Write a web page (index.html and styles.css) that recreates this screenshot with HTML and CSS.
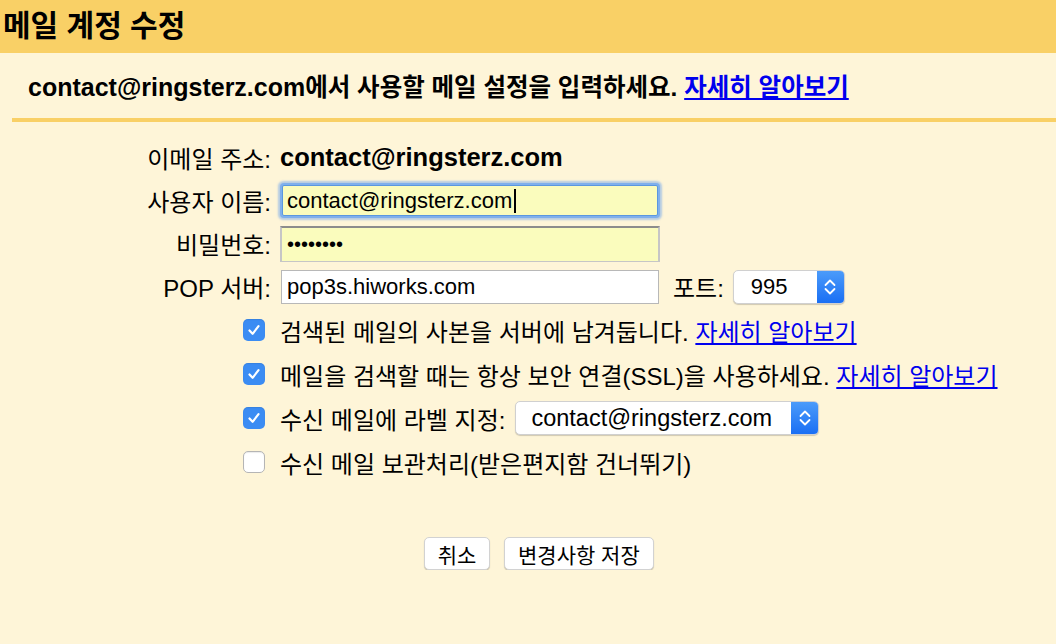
FILE: index.html
```html
<!DOCTYPE html>
<html lang="ko">
<head>
<meta charset="utf-8">
<title>메일 계정 수정</title>
<link rel="stylesheet" href="styles.css">
</head>
<body>
<div class="header"><h1>메일 계정 수정</h1></div>
<div class="intro"><p><span class="en">contact@ringsterz.com</span>에서 사용할 메일 설정을 입력하세요. <a href="#">자세히 알아보기</a></p></div>
<div class="rule"></div>
<div class="form">
  <div class="row"><span class="label">이메일 주소:</span><span class="value">contact@ringsterz.com</span></div>
  <div class="row"><span class="label">사용자 이름:</span><div class="field focused">contact@ringsterz.com<span class="caret"></span></div></div>
  <div class="row"><span class="label">비밀번호:</span><div class="field pwd">••••••••</div></div>
  <div class="row"><span class="label">POP 서버:</span><div class="field plain">pop3s.hiworks.com</div><span class="port-label">포트:</span>
    <div class="select port"><span class="sel-text">995</span><span class="sel-btn"><svg viewBox="0 0 16 22" width="16" height="22"><path d="M3.5 9 L8 4.5 L12.5 9 M3.5 13 L8 17.5 L12.5 13" fill="none" stroke="#fff" stroke-width="1.8" stroke-linecap="round" stroke-linejoin="round"/></svg></span></div>
  </div>
</div>
<div class="options">
  <div class="opt"><span class="cb on"><svg viewBox="0 0 22 22" width="22" height="22"><path d="M6.5 11.5 L9.6 14.8 L15.5 7.2" fill="none" stroke="#fff" stroke-width="2.2" stroke-linecap="round" stroke-linejoin="round"/></svg></span><span class="opt-text">검색된 메일의 사본을 서버에 남겨둡니다. <a href="#">자세히 알아보기</a></span></div>
  <div class="opt"><span class="cb on"><svg viewBox="0 0 22 22" width="22" height="22"><path d="M6.5 11.5 L9.6 14.8 L15.5 7.2" fill="none" stroke="#fff" stroke-width="2.2" stroke-linecap="round" stroke-linejoin="round"/></svg></span><span class="opt-text">메일을 검색할 때는 항상 보안 연결(SSL)을 사용하세요. <a href="#">자세히 알아보기</a></span></div>
  <div class="opt"><span class="cb on"><svg viewBox="0 0 22 22" width="22" height="22"><path d="M6.5 11.5 L9.6 14.8 L15.5 7.2" fill="none" stroke="#fff" stroke-width="2.2" stroke-linecap="round" stroke-linejoin="round"/></svg></span><span class="opt-text">수신 메일에 라벨 지정:</span>
    <div class="select labelsel"><span class="sel-text">contact@ringsterz.com</span><span class="sel-btn"><svg viewBox="0 0 16 22" width="16" height="22"><path d="M3.5 9 L8 4.5 L12.5 9 M3.5 13 L8 17.5 L12.5 13" fill="none" stroke="#fff" stroke-width="1.8" stroke-linecap="round" stroke-linejoin="round"/></svg></span></div>
  </div>
  <div class="opt"><span class="cb"></span><span class="opt-text">수신 메일 보관처리(받은편지함 건너뛰기)</span></div>
</div>
<div class="actions"><button class="btn cancel">취소</button><button class="btn">변경사항 저장</button></div>
</body>
</html>
```

FILE: styles.css
```css
body {
  margin: 0;
  background: #fef5d8;
  font-family: "Liberation Sans", "Noto Sans CJK KR", sans-serif;
  color: #000;
}
a { color: #0000ee; text-decoration: underline; }

.header {
  height: 53px;
  background: #f9d066;
  display: flex;
  align-items: center;
  padding-left: 3px;
  padding-bottom: 2px;
  box-sizing: border-box;
}
.header h1 { margin: 0; font-size: 30px; font-weight: bold; line-height: 1; }

.intro {
  height: 65px;
  display: flex;
  align-items: center;
  padding-left: 28px;
}
.intro p { margin: 0; font-size: 24.5px; font-weight: bold; }
.intro .en { font-size: 25px; }

.rule { margin-left: 12px; height: 4px; background: #f9d066; }

.form { padding-top: 14px; }
.row { height: 43px; display: flex; align-items: center; }
.label { width: 271px; text-align: right; font-size: 24px; margin-right: 9px; flex: none; }
.value { font-size: 25.5px; font-weight: bold; }

.field {
  width: 380px;
  height: 34px;
  box-sizing: border-box;
  font-size: 22px;
  display: flex;
  align-items: center;
  padding-left: 5px;
  background: #fff;
}
.field.focused {
  width: 376px;
  height: 31px;
  margin-left: 2px;
  background: #fafcbd;
  border: 1px solid #5a97df;
  border-radius: 2px;
  box-shadow: 0 0 0 2px #7fb0ec, 0 0 2px 4px rgba(120, 170, 235, 0.55);
  padding-left: 4px;
}
.caret { display: inline-block; width: 2px; height: 24px; background: #000; margin-left: 2px; }
.field.pwd {
  height: 36px;
  background: #fafcbd;
  border: 2px solid #c6c6c6;
  border-top-color: #8c8c8c;
  border-bottom-width: 1px;
  font-size: 20px;
  padding-left: 5px;
}
.field.plain { width: 378px; margin-left: 1px; border: 1px solid #b8b8b8; }

.port-label { font-size: 24px; margin-left: 14px; margin-right: 9px; }

.select {
  display: flex;
  align-items: stretch;
  height: 34px;
  box-sizing: border-box;
  background: #fff;
  border: 1px solid #d0d0d0;
  border-radius: 5px;
  box-shadow: 0 1px 1px rgba(0, 0, 0, 0.18);
  overflow: hidden;
}
.sel-text { flex: 1; display: flex; align-items: center; }
.sel-btn {
  width: 27px;
  background: linear-gradient(#4b9bfa, #1a6ff4);
  display: flex;
  align-items: center;
  justify-content: center;
}
.select.port { width: 112px; }
.select.port .sel-text { padding-left: 17px; font-size: 22px; }
.select.labelsel { width: 304px; margin-left: 10px; }
.select.labelsel .sel-text { padding-left: 15px; font-size: 23.5px; }

.options { padding-left: 243px; }
.opt { height: 44px; display: flex; align-items: center; }
.opt-text { font-size: 24px; }
.cb {
  width: 22px;
  height: 22px;
  box-sizing: border-box;
  border-radius: 5px;
  margin-right: 15px;
  flex: none;
  background: #fff;
  border: 1px solid #b5b5b5;
  box-shadow: inset 0 1px 1px rgba(0, 0, 0, 0.08);
}
.cb svg { display: block; }
.cb.on { background: #3b8cf3; border: none; }

.actions { display: flex; gap: 14px; padding: 53px 0 0 424px; }
.btn {
  height: 33px;
  padding: 0 13px;
  font-family: "Liberation Sans", "Noto Sans CJK KR", sans-serif;
  font-size: 21px;
  color: #000;
  background: #fff;
  border: 1px solid #d2d2d2;
  border-radius: 5px;
  box-shadow: 0 1px 1px rgba(0, 0, 0, 0.2);
}
.btn.cancel { width: 66px; padding: 0; }
```
